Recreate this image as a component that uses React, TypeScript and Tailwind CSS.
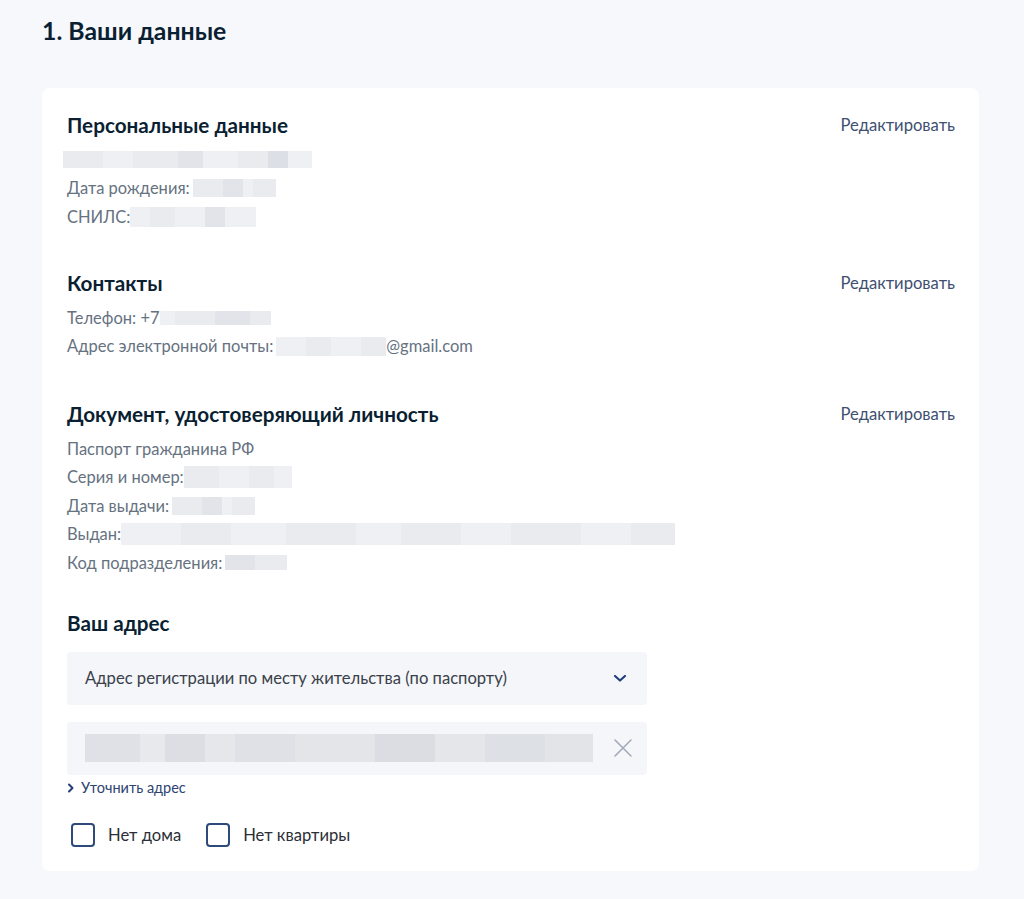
import React from "react";

type Seg = [number, string];

const Blur = ({ w, h, segs }: { w: string; h: string; segs: Seg[] }) => (
  <span className={`inline-flex align-middle overflow-hidden shrink-0 ${w} ${h}`}>
    {segs.map(([width, color], i) => (
      <span key={i} className="h-full shrink-0" style={{ width, background: color }} />
    ))}
  </span>
);

const g1 = "#e9ebef";
const g2 = "#e2e4e9";
const g3 = "#eef0f3";
const g4 = "#dcdfe5";

const Row = ({ children }: { children: React.ReactNode }) => (
  <div className="leading-[28.5px] h-[28.5px] text-[16.5px] text-[#66727f] flex items-center whitespace-nowrap">{children}</div>
);

const Heading = ({ children, edit }: { children: React.ReactNode; edit?: boolean }) => (
  <div className="flex items-center justify-between h-7">
    <h2 className="text-[20.7px] font-bold text-[#0b1f33] leading-7">{children}</h2>
    {edit && <span className="text-[16.6px] text-[#3e4f72] leading-7">Редактировать</span>}
  </div>
);

export default function App() {
  return (
    <div className="min-h-[899px] w-[1024px] bg-[#f7f8fc] pl-[42px] pr-[45px] pt-[16px] pb-[29px]" style={{ fontFamily: "Lato, 'Noto Sans', sans-serif" }}>
      <h1 className="text-[24.8px] font-bold text-[#0b1f33] leading-[30px]">1. Ваши данные</h1>
      <div className="mt-[42px] bg-white rounded-[8px] pl-[25px] pr-[24px] pt-[23px] pb-[24px]">
        {/* Personal */}
        <Heading edit>Персональные данные</Heading>
        <div className="mt-[6.5px]">
          <Row>
            <span className="-ml-1 flex">
              <Blur w="w-[249px]" h="h-[17px]" segs={[[40, g1], [30, g3], [45, g1], [25, g2], [35, g3], [30, g1], [20, g4], [24, g3]]} />
            </span>
          </Row>
          <Row>
            Дата рождения:
            <span className="ml-[3px] flex">
              <Blur w="w-[83px]" h="h-[18px]" segs={[[30, g1], [20, g2], [10, g3], [23, g1]]} />
            </span>
          </Row>
          <Row>
            СНИЛС:
            <Blur w="w-[126px]" h="h-[20px]" segs={[[20, g3], [25, g1], [30, g3], [20, g2], [31, g3]]} />
          </Row>
        </div>

        {/* Contacts */}
        <div className="mt-[38px]">
          <Heading edit>Контакты</Heading>
          <div className="mt-[6.5px]">
            <Row>
              Телефон: +7
              <Blur w="w-[111px]" h="h-[14px]" segs={[[15, g3], [40, g1], [35, g2], [21, g1]]} />
            </Row>
            <Row>
              Адрес электронной почты:
              <span className="ml-[3px] flex">
                <Blur w="w-[110px]" h="h-[19px]" segs={[[30, g3], [25, g1], [30, g3], [25, g1]]} />
              </span>
              @gmail.com
            </Row>
          </div>
        </div>

        {/* Document */}
        <div className="mt-[39.5px]">
          <Heading edit>Документ, удостоверяющий личность</Heading>
          <div className="mt-[6.5px]">
            <Row>Паспорт гражданина РФ</Row>
            <Row>
              Серия и номер:
              <Blur w="w-[108px]" h="h-[22px]" segs={[[35, g1], [30, g3], [25, g1], [18, g3]]} />
            </Row>
            <Row>
              Дата выдачи:
              <span className="ml-[3px] flex">
                <Blur w="w-[83px]" h="h-[18px]" segs={[[30, g1], [20, g2], [10, g3], [23, g1]]} />
              </span>
            </Row>
            <Row>
              Выдан:
              <Blur w="w-[554px]" h="h-[22px]" segs={[[60, g3], [50, g1], [55, g3], [70, g1], [45, g3], [60, g1], [50, g3], [70, g1], [50, g3], [44, g1]]} />
            </Row>
            <Row>
              Код подразделения:
              <span className="ml-[3px] flex">
                <Blur w="w-[62px]" h="h-[15px]" segs={[[30, g2], [32, g1]]} />
              </span>
            </Row>
          </div>
        </div>

        {/* Address */}
        <div className="mt-[31.5px]">
          <Heading>Ваш адрес</Heading>
          <div className="mt-[15px] w-[580px] h-[53px] rounded-[4px] bg-[#f4f6fa] flex items-center justify-between pl-[18px] pr-[20px]">
            <span className="text-[16.6px] text-[#3a4049]">Адрес регистрации по месту жительства (по паспорту)</span>
            <svg width="14" height="10" viewBox="0 0 14 10" fill="none">
              <path d="M2 3l5 4.5L12 3" stroke="#233f7a" strokeWidth="2.2" strokeLinecap="round" strokeLinejoin="round" />
            </svg>
          </div>
          <div className="mt-[17px] w-[580px] h-[53px] rounded-[4px] bg-[#f4f6fa] flex items-center justify-between pl-[18px] pr-[14px]">
            <Blur w="w-[508px]" h="h-[28px]" segs={[[55, "#dfe1e6"], [25, "#e7e9ed"], [40, "#dcdee3"], [30, "#e5e7eb"], [60, "#dfe1e6"], [80, "#e3e5e9"], [60, "#dbdde2"], [50, "#e4e6ea"], [60, "#dde0e4"], [48, "#e2e4e8"]]} />
            <svg width="20" height="20" viewBox="0 0 20 20" fill="none">
              <path d="M2 2l16 16M18 2L2 18" stroke="#a2aab8" strokeWidth="1.6" strokeLinecap="round" />
            </svg>
          </div>
          <div className="mt-[4px] flex items-center gap-[6px] h-[18px] text-[14.5px] text-[#2c4373] leading-[18px]">
            <svg width="8" height="10" viewBox="0 0 8 10" fill="none">
              <path d="M2 1.5l3.5 3.5L2 8.5" stroke="#233f7a" strokeWidth="2" strokeLinecap="round" strokeLinejoin="round" />
            </svg>
            <span>Уточнить адрес</span>
          </div>
          <div className="mt-[26px] flex items-center pl-[4px]">
            <label className="flex items-center">
              <span className="w-6 h-6 rounded-[4px] border-2 border-[#2d4a7a] bg-white" />
              <span className="ml-[13px] text-[16.6px] text-[#2b2f36]">Нет дома</span>
            </label>
            <label className="flex items-center ml-[25px]">
              <span className="w-6 h-6 rounded-[4px] border-2 border-[#2d4a7a] bg-white" />
              <span className="ml-[13px] text-[16.6px] text-[#2b2f36]">Нет квартиры</span>
            </label>
          </div>
        </div>
      </div>
    </div>
  );
}
